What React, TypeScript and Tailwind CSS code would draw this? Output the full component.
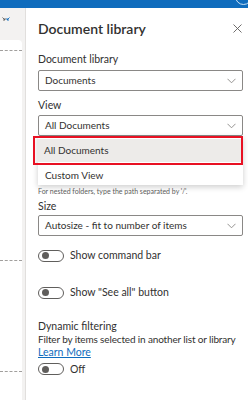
import React from "react";

const Chevron = () => (
  <svg width="9" height="6" viewBox="0 0 9 6" fill="none">
    <path d="M0.5 0.8 L4.5 4.8 L8.5 0.8" stroke="#8a8886" strokeWidth="0.9" />
  </svg>
);

const Dropdown = ({ text }: { text: string }) => (
  <div className="flex h-[21px] items-center justify-between rounded-[2px] border border-[#8a8886] bg-white pl-[6px] pr-[6px]">
    <span className="text-[10px] text-[#323130]">{text}</span>
    <Chevron />
  </div>
);

const Toggle = () => (
  <div className="flex h-[12px] w-[26px] items-center rounded-full border border-[#605e5c] bg-white pl-[3px]">
    <div className="h-[7px] w-[7px] rounded-full bg-[#605e5c]" />
  </div>
);

export default function App() {
  return (
    <div
      className="relative h-[400px] w-[248px] overflow-hidden bg-white"
      style={{ fontFamily: 'Lato, "Open Sans", sans-serif' }}
    >
      <div className="relative h-[8px] bg-[#0f6cbd]">
        <div className="absolute right-[-4px] top-[-12px] h-[17px] w-[17px] rounded-full border border-[#c7e0f4]" />
      </div>
      <div className="flex h-[392px]">
        <div className="flex w-[25px] flex-col bg-[#f3f2f1]">
          <div className="flex h-[32px] items-start pl-[2px] pt-[9px]">
            <svg width="8" height="8" viewBox="0 0 8 8" fill="none">
              <path d="M0.5 0.5 L3 3 M3 1 L3 3 L1 3" stroke="#605e5c" strokeWidth="0.9" />
              <path d="M7.5 0.5 L5 3 M5 1 L5 3 L7 3" stroke="#0f6cbd" strokeWidth="0.9" />
            </svg>
          </div>
          <div className="mr-[3px] flex flex-1 flex-col rounded-tr-[4px] bg-white">
            <div className="mt-[10px] border-t border-dashed border-[#a19f9d]" />
            <div className="mt-[209px] border-t border-dashed border-[#a19f9d]" />
            <div className="mt-[110px] border-t border-dashed border-[#a19f9d]" />
          </div>
        </div>
        <div className="relative flex-1 border-l border-[#e1dfdd] bg-white pl-[12px] pr-[5px]">
          <div className="flex h-[40px] items-center justify-between pt-[1px]">
            <span className="text-[14px] font-semibold text-[#323130]">Document library</span>
            <svg width="9" height="9" viewBox="0 0 9 9" className="mr-[1px]">
              <path d="M0.5 0.5 L8.5 8.5 M8.5 0.5 L0.5 8.5" stroke="#605e5c" strokeWidth="0.9" />
            </svg>
          </div>
          <div className="mt-[4px] text-[10.5px] leading-[14px] text-[#323130]">Document library</div>
          <div className="mt-[4px]">
            <Dropdown text="Documents" />
          </div>
          <div className="mt-[7px] text-[10.5px] leading-[14px] text-[#323130]">View</div>
          <div className="mt-[3px]">
            <Dropdown text="All Documents" />
          </div>
          <div className="relative z-10 bg-white shadow-[0_2px_6px_rgba(0,0,0,0.2)]">
            <div className="ml-[-5px] flex h-[29px] items-center border-[2.5px] border-[#e81123] py-[1px] pl-[2px]">
              <div className="flex h-full flex-1 items-center bg-[#edebe9] pl-[7px]">
                <span className="text-[10px] text-[#323130]">All Documents</span>
              </div>
            </div>
            <div className="flex h-[20px] items-center pl-[7px]">
              <span className="text-[10px] text-[#323130]">Custom View</span>
            </div>
          </div>
          <div className="mt-[1px] text-[7px] leading-[10px] text-[#605e5c]">
            For nested folders, type the path separated by '/'.
          </div>
          <div className="mt-[3px] text-[10.5px] leading-[14px] text-[#323130]">Size</div>
          <div className="mt-[2px]">
            <Dropdown text="Autosize - fit to number of items" />
          </div>
          <div className="mt-[12px] flex items-center gap-[6px]">
            <Toggle />
            <span className="text-[10.5px] text-[#323130]">Show command bar</span>
          </div>
          <div className="mt-[21px] flex items-center gap-[6px]">
            <Toggle />
            <span className="text-[10.5px] text-[#323130]">Show "See all" button</span>
          </div>
          <div className="mt-[19px] text-[10.5px] leading-[13px] text-[#323130]">Dynamic filtering</div>
          <div className="whitespace-nowrap text-[10px] leading-[13px] tracking-[-0.15px] text-[#323130]">
            Filter by items selected in another list or library
          </div>
          <div className="text-[10.5px] leading-[13px] text-[#0f6cbd] underline">Learn More</div>
          <div className="mt-[3px] flex items-center gap-[6px]">
            <Toggle />
            <span className="text-[10.5px] text-[#323130]">Off</span>
          </div>
        </div>
      </div>
    </div>
  );
}
